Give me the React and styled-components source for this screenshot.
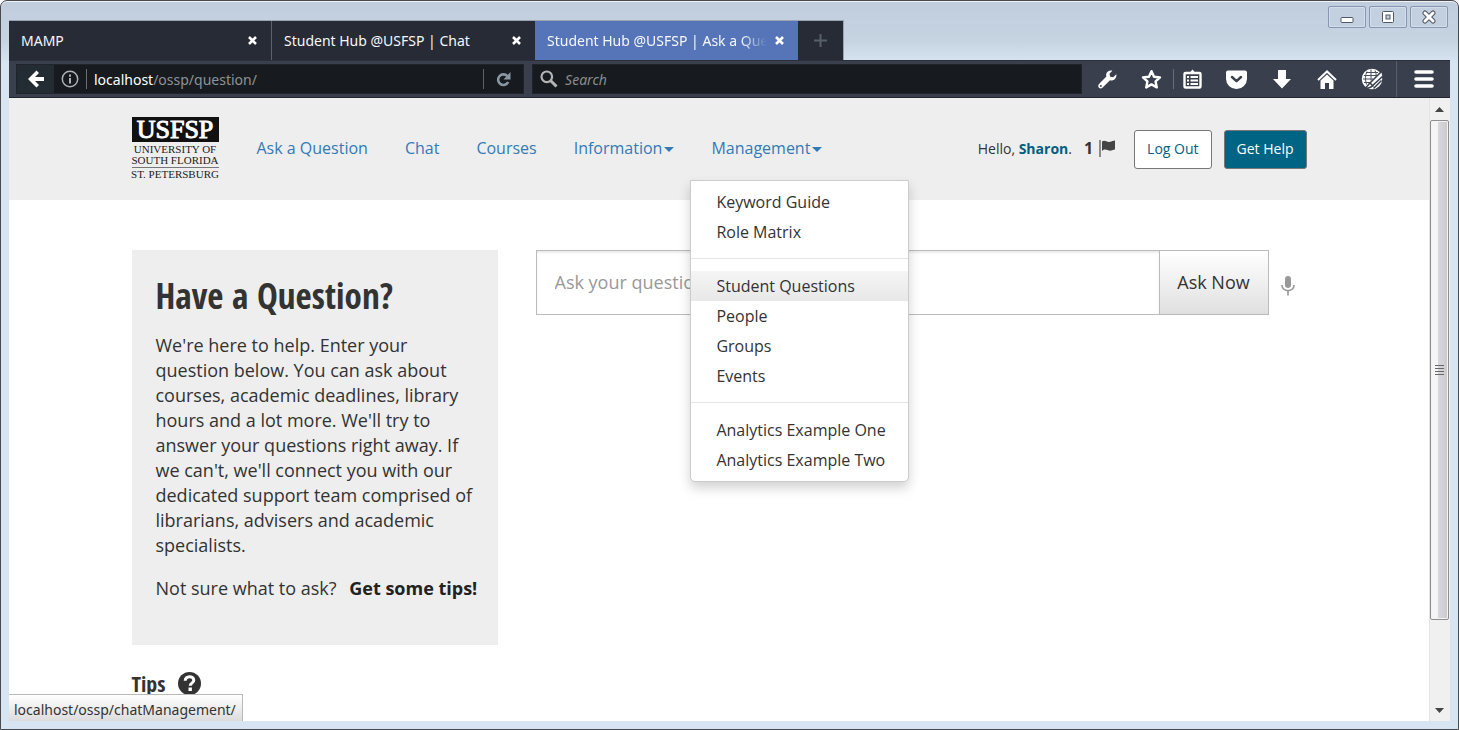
import React from "react";
import styled, { createGlobalStyle, css } from "styled-components";

const GlobalStyle = createGlobalStyle`
  *, *::before, *::after { box-sizing: border-box; }
  html, body { margin: 0; height: 100%; }
  body {
    font-family: "Open Sans", "Noto Sans", sans-serif;
    font-size: 16px;
    color: #333;
    overflow: hidden;
  }
  button, input { font: inherit; color: inherit; margin: 0; }
  a { text-decoration: none; }
`;

const Window = styled.div`
  display: flex;
  flex-direction: column;
  height: 100vh;
  padding: 0 8px 8px;
  border: 1px solid #4a494d;
  border-radius: 7px 7px 0 0;
  background: linear-gradient(#c0cddd 0, #c6d3e1 40px, #d7e4f2 62px);
  box-shadow: inset 0 1px 0 #eef3f8;
`;

const TitleBar = styled.header`
  display: flex;
  justify-content: space-between;
  height: 59px;
  flex: none;
`;

const TabStrip = styled.div`
  display: flex;
  align-self: flex-end;
  height: 40px;
  border-top: 1px solid #9aa3b0;
`;

const Tab = styled.div`
  display: flex;
  align-items: center;
  width: 263px;
  padding: 0 14px 0 12px;
  gap: 8px;
  font-family: "Noto Sans", "Open Sans", sans-serif;
  font-size: 14px;
  color: #f5f7fa;
  background: ${(p) => (p.$active ? "#5675b9" : "#272b35")};
  border-right: ${(p) => (p.$divided ? "1px solid #5b606b" : "0")};
`;

const TabTitle = styled.span`
  flex: 1;
  overflow: hidden;
  white-space: nowrap;
  ${(p) => p.$fade && css`mask-image: linear-gradient(to right, #000 88%, transparent);`}
`;

const PlainButton = styled.button`
  display: flex;
  align-items: center;
  justify-content: center;
  padding: 0;
  border: 0;
  background: none;
  color: #fff;
`;

const NewTab = styled(PlainButton)`
  width: 46px;
  background: #272b35;
  color: #566069;
  border-right: 1px solid #9aa3b0;
`;

const WindowControls = styled.div`
  display: flex;
  gap: 3px;
  padding: 5px 2px 0 0;
`;

const ControlButton = styled(PlainButton)`
  width: 38px;
  height: 22px;
  border: 1px solid #8595b3;
  border-radius: 2px;
  background: #c3d0e0;
  box-shadow: inset 0 0 0 1px #d3deea;
`;

const Toolbar = styled.div`
  display: flex;
  align-items: center;
  flex: none;
  height: 38px;
  padding: 0 0 0 7px;
  gap: 8px;
  background: #393f4c;
  border-top: 1px solid #2a2f3a;
  border-bottom: 1px solid #20242c;
  font-family: "Noto Sans", "Open Sans", sans-serif;
  font-size: 14px;
`;

const Field = styled.div`
  display: flex;
  align-items: center;
  flex: ${(p) => p.$grow} 1 0;
  min-width: 0;
  height: 30px;
  background: #171b1f;
  border: 1px solid #1f252b;
`;

const BackButton = styled(PlainButton)`
  width: 37px;
  height: 100%;
  background: #232b33;
`;

const InfoButton = styled(PlainButton)`
  width: 33px;
  height: 20px;
  border-right: 1px solid #6b7075;
  color: #aeb2b6;
`;

const Address = styled.div`
  flex: 1;
  padding-left: 7px;
  color: #8d9297;
  b { font-weight: 400; color: #fff; }
`;

const Reload = styled(PlainButton)`
  width: 40px;
  height: 20px;
  border-left: 1px solid #5d6266;
  color: #8a97a3;
`;

const SearchInput = styled.input`
  flex: 1;
  min-width: 0;
  padding: 0 0 0 7px;
  border: 0;
  outline: 0;
  background: none;
  color: #fff;
  &::placeholder { color: #8a8c8e; font-style: italic; opacity: 1; }
`;

const SearchLabel = styled.label`
  display: flex;
  padding-left: 7px;
  color: #b4b4b4;
`;

const Tools = styled.div`
  display: flex;
  align-items: center;
  margin-left: -5px;
`;

const Tool = styled(PlainButton)`
  width: 45px;
  height: 36px;
`;

const BookmarkPair = styled.div`
  display: flex;
  align-items: center;
  width: 84px;
`;

const PairTool = styled(PlainButton)`
  width: ${(p) => (p.$first ? "43px" : "37px")};
  height: 20px;
  border-left: ${(p) => (p.$first ? "0" : "1px solid #666c78")};
`;

const MenuButton = styled(PlainButton)`
  width: 54px;
  height: 36px;
  margin-left: 2px;
  border-left: 1px solid #565c69;
`;

const Viewport = styled.div`
  position: relative;
  display: flex;
  flex: 1;
  min-height: 0;
  background: #fff;
`;

const Page = styled.div`
  flex: 1;
  min-width: 0;
  overflow: hidden;
`;

const SiteHeader = styled.header`
  height: 102px;
  background: #eee;
`;

const Container = styled.div`
  display: flex;
  width: 100%;
  max-width: 1175px;
  margin: 0 auto;
`;

const HeaderRow = styled(Container)`
  height: 102px;
  align-items: center;
`;

const Logo = styled.a`
  display: flex;
  flex-direction: column;
  width: 87px;
  height: 64px;
  margin-right: 38px;
  color: #222;
  font-family: "Liberation Serif", serif;
  font-size: 11px;
  line-height: 11px;
  text-align: center;
  white-space: nowrap;
`;

const LogoMark = styled.strong`
  height: 25px;
  margin-bottom: 2px;
  background: #111;
  color: #fff;
  font-size: 26px;
  font-weight: 400;
  line-height: 25px;
  -webkit-text-stroke: 1px #fff;
`;

const LogoLine = styled.span`
  display: flex;
  justify-content: center;
  ${(p) => p.$ruled && css`
    margin-top: 1px;
    padding-top: 1px;
    border-top: 1px solid #777;
  `}
`;

const Nav = styled.nav`
  display: flex;
  gap: 37px;
  padding-bottom: 2px;
  line-height: 24px;
`;

const NavItem = styled.div`
  position: relative;
`;

const NavLink = styled.a`
  display: flex;
  align-items: center;
  gap: 2px;
  color: #337ab7;
`;

const Caret = styled.span`
  margin-top: 3px;
  border: 5px solid transparent;
  border-top-color: currentColor;
  border-bottom: 0;
`;

const Menu = styled.div`
  position: absolute;
  z-index: 2;
  top: calc(100% + 20px);
  left: -21px;
  width: 219px;
  padding: 6px 0;
  border: 1px solid #ccc;
  border-radius: 0 0 5px 5px;
  background: #fff;
  box-shadow: 0 6px 12px rgba(0, 0, 0, 0.18);
`;

const MenuLink = styled.a`
  display: block;
  padding: 0 25px;
  line-height: 30px;
  white-space: nowrap;
  color: #333;
  background: ${(p) => (p.$hovered ? "linear-gradient(#f5f5f5, #e8e8e8)" : "none")};
`;

const Divider = styled.hr`
  height: 1px;
  margin: 11px 0 12px;
  border: 0;
  background: #e5e5e5;
`;

const Account = styled.div`
  display: flex;
  align-items: center;
  margin-left: auto;
  font-size: 14px;
`;

const Greeting = styled.span`
  padding-bottom: 2px;
`;

const Name = styled.a`
  color: #00617f;
  font-weight: 700;
`;

const Flags = styled.span`
  display: flex;
  align-items: center;
  gap: 6px;
  margin: 0 19px 0 12px;
  padding-bottom: 2px;
  font-size: 16px;
  font-weight: 700;
`;

const ActionButton = styled.button`
  height: 39px;
  padding: 0 12px 2px;
  border: 1px solid #777;
  border-radius: 3px;
  background: ${(p) => (p.$primary ? "#006484" : "#fff")};
  color: ${(p) => (p.$primary ? "#fff" : "#00617f")};
  & + & { margin-left: 12px; }
`;

const Main = styled(Container)`
  padding-top: 50px;
  gap: 38px;
`;

const Side = styled.aside`
  flex: 0 0 366px;
  min-width: 0;
`;

const Card = styled.section`
  padding: 24px 22px 44px 24px;
  background: #eee;
  font-size: 18px;
  line-height: 25px;
  p { margin: 0 0 18px; }
  p:last-child { margin: 0; white-space: nowrap; }
`;

const condensed = css`
  font-family: "Open Sans Condensed", "Noto Sans Condensed", "Liberation Sans Narrow", "Open Sans", sans-serif;
  font-weight: 700;
`;

const Title = styled.h1`
  ${condensed}
  margin: 0 0 15px;
  font-size: 35px;
  line-height: 44px;
  white-space: nowrap;
`;

const TipsLink = styled.a`
  margin-left: 8px;
  color: #222;
  font-weight: 700;
`;

const TipsHeading = styled.h2`
  ${condensed}
  display: flex;
  align-items: center;
  gap: 13px;
  margin: 22px 0 0;
  font-size: 22px;
  line-height: 32px;
`;

const AskForm = styled.form`
  display: flex;
  align-items: flex-start;
  flex: 1;
  min-width: 0;
  font-size: 18px;
`;

const Question = styled.input`
  flex: 1;
  min-width: 0;
  height: 65px;
  padding: 0 18px 2px;
  border: 1px solid #bbb;
  border-right: 0;
  background: #fff;
  box-shadow: inset 0 2px 2px rgba(0, 0, 0, 0.08);
  &::placeholder { color: #999; opacity: 1; }
`;

const AskButton = styled.button`
  width: 110px;
  height: 65px;
  padding: 0 0 2px;
  border: 1px solid #bbb;
  background: linear-gradient(#fff, #e0e0e0);
`;

const Mic = styled(PlainButton)`
  width: 38px;
  height: 72px;
  color: #999;
`;

const ScrollBar = styled.div`
  display: flex;
  flex-direction: column;
  width: 21px;
  padding-right: 1px;
  border-left: 1px solid #e3e3e3;
  background: #f0f0f0;
`;

const ScrollArrow = styled(PlainButton)`
  height: 22px;
  flex: none;
  color: #444;
`;

const ScrollThumb = styled.div`
  display: flex;
  flex: 500 1 0;
  align-items: center;
  justify-content: center;
  border: 1px solid #8e8e8e;
  border-radius: 2px;
  background: linear-gradient(to right, #f5f5f5 0 38%, #d8d9dc 42%, #c9cacd);
  box-shadow: inset 0 0 0 1px #f3f3f3;
`;

const ScrollRest = styled.div`
  flex: 79 1 0;
`;

const Status = styled.div`
  position: absolute;
  left: 0;
  bottom: 0;
  height: 27px;
  padding: 0 6px 0 5px;
  border: 1px solid #b9b9b9;
  border-width: 1px 1px 0 0;
  background: linear-gradient(#fff, #dcdcdc);
  font-family: "Noto Sans", "Open Sans", sans-serif;
  font-size: 14px;
  line-height: 29px;
`;

const CloseX = () => (
  <svg width="9" height="9" viewBox="0 0 9 9" stroke="currentColor" strokeWidth="2.6" aria-hidden="true">
    <path d="M1 1l7 7M8 1L1 8" />
  </svg>
);

const MENU = [
  ["Keyword Guide", "Role Matrix"],
  ["Student Questions", "People", "Groups", "Events"],
  ["Analytics Example One", "Analytics Example Two"],
];

const TABS = [
  { title: "MAMP", divided: true },
  { title: "Student Hub @USFSP | Chat" },
  { title: "Student Hub @USFSP | Ask a Question", active: true },
];

function BrowserTabs() {
  return (
    <TabStrip>
      {TABS.map((t) => (
        <Tab key={t.title} $active={t.active} $divided={t.divided}>
          <TabTitle $fade={t.active}>{t.title}</TabTitle>
          <PlainButton aria-label={`Close ${t.title}`}><CloseX /></PlainButton>
        </Tab>
      ))}
      <NewTab aria-label="New tab">
        <svg width="13" height="13" viewBox="0 0 13 13" stroke="currentColor" strokeWidth="2"><path d="M6.5 0v13M0 6.5h13" /></svg>
      </NewTab>
    </TabStrip>
  );
}

function Controls() {
  return (
    <WindowControls>
      <ControlButton aria-label="Minimize">
        <svg width="14" height="14" viewBox="0 0 14 14"><rect x="1" y="7.500" width="12" height="5" rx="1" fill="#fff" stroke="#525866" /></svg>
      </ControlButton>
      <ControlButton aria-label="Maximize">
        <svg width="14" height="14" viewBox="0 0 14 14" fill="#fff" stroke="#525866"><rect x="1.5" y="1.5" width="11" height="11" rx="1" /><rect x="5" y="5" width="4" height="4" fill="#c3d0e0" /></svg>
      </ControlButton>
      <ControlButton aria-label="Close">
        <svg width="14" height="14" viewBox="0 0 14 14" strokeLinecap="round"><path d="M3 3l8 8M11 3l-8 8" stroke="#525866" strokeWidth="5" /><path d="M3 3l8 8M11 3l-8 8" stroke="#fff" strokeWidth="3" /></svg>
      </ControlButton>
    </WindowControls>
  );
}

function BrowserToolbar() {
  return (
    <Toolbar>
      <Field $grow={508}>
        <BackButton aria-label="Back">
          <svg width="16" height="18" viewBox="0 0 16 18" fill="currentColor"><path d="M8.500 0.500l2.500 2.500-4 4H16v4H7l4 4-2.500 2.500L0 9z" /></svg>
        </BackButton>
        <InfoButton aria-label="Site information">
          <svg width="18" height="18" viewBox="0 0 18 18" fill="none" stroke="currentColor"><circle cx="9" cy="9" r="7.700" strokeWidth="1.500" /><path d="M9 8v5.500M9 4.500v2.200" strokeWidth="2" /></svg>
        </InfoButton>
        <Address><b>localhost</b>/ossp/question/</Address>
        <Reload aria-label="Reload">
          <svg width="15" height="15" viewBox="0 0 15 15"><path d="M11.400 4.200A5.300 5.300 0 1 0 12.200 10" fill="none" stroke="currentColor" strokeWidth="2.600" /><path d="M14.500 0v7.500H7.500z" fill="currentColor" /></svg>
        </Reload>
      </Field>
      <Field $grow={550}>
        <SearchLabel htmlFor="browser-search" aria-label="Search">
          <svg width="18" height="18" viewBox="0 0 18 18" fill="none" stroke="currentColor"><circle cx="6.800" cy="6.800" r="5.300" strokeWidth="2.200" /><path d="M10.500 10.500l6 6" strokeWidth="3" /></svg>
        </SearchLabel>
        <SearchInput id="browser-search" placeholder="Search" />
      </Field>
      <Tools>
        <Tool aria-label="Developer tools">
          <svg width="19" height="19" viewBox="0 0 19 19"><path d="M18.300 4.300l-3.100 2.900-3-.500-.7-3L14.300.8C11.800-.2 9 1.300 8.300 3.800c-.3 1-.2 1.900.1 2.800L1 14.100c-1 1-1 2.600 0 3.600 1 .900 2.500.9 3.400 0l7.600-7.500c3.600 1 7.100-2.100 6.300-5.900z" fill="currentColor" /><circle cx="2.900" cy="15.900" r="1" fill="#393f4c" /></svg>
        </Tool>
        <BookmarkPair>
          <PairTool $first aria-label="Bookmark">
            <svg width="21" height="21" viewBox="0 0 21 21"><path d="M10.500 2.200l2.500 5.500 6 .700-4.400 4 1.200 6-5.300-3-5.300 3 1.200-6-4.400-4 6-.7z" fill="none" stroke="currentColor" strokeWidth="2.400" strokeLinejoin="round" /></svg>
          </PairTool>
          <PairTool aria-label="Bookmarks list">
            <svg width="19" height="20" viewBox="0 0 19 20"><path d="M6.500 4L9.500.500 12.500 4z" fill="currentColor" /><rect x="1.500" y="4" width="16" height="14.500" rx="1" fill="none" stroke="currentColor" strokeWidth="2.400" /><path d="M4 8h2M4 11.500h2M4 15h2M7.500 8h7.500M7.500 11.500h7.500M7.500 15h7.500" stroke="currentColor" strokeWidth="2" /></svg>
          </PairTool>
        </BookmarkPair>
        <Tool aria-label="Save to Pocket">
          <svg width="21" height="19" viewBox="0 0 21 19"><path d="M2 .5h17c1.100 0 2 .8 2 2v6A10.400 10.400 0 0 1 10.500 19 10.400 10.400 0 0 1 0 8.500v-6c0-1.200.9-2 2-2z" fill="currentColor" /><path d="M6 7l4.500 4.200L15 7" fill="none" stroke="#393f4c" strokeWidth="2.500" strokeLinecap="round" strokeLinejoin="round" /></svg>
        </Tool>
        <Tool aria-label="Downloads">
          <svg width="18" height="19" viewBox="0 0 18 19" fill="currentColor"><path d="M5 0h8v9h5l-9 9.500L0 9h5z" /></svg>
        </Tool>
        <Tool aria-label="Home">
          <svg width="20" height="19" viewBox="0 0 20 19"><path d="M1 10l9-8.500L19 10" fill="none" stroke="currentColor" strokeWidth="2" /><path d="M3.500 10.500L10 4.500l6.500 6V19H12v-6H8v6H3.500z" fill="currentColor" /></svg>
        </Tool>
        <Tool aria-label="Web annotations">
          <svg width="22" height="22" viewBox="0 0 22 22"><circle cx="11" cy="11" r="9.500" fill="#fff" stroke="#fff" strokeWidth="1.500" /><path d="M3 7.500h13M2 11h10M3 14.500h6M10 1.500v11M6 3.500c-2 4-2 8-.5 13M14 2.500c1 2 1.300 4 1 6M5 4.500h12" stroke="#4b515e" fill="none" /><path d="M21 3L8 16l-4.500 5.500L10 19 22 8z" fill="#fff" stroke="#393f4c" strokeWidth="1.500" /><path d="M9 15l3.500 3.500M12.500 20.500l8-8" stroke="#393f4c" strokeWidth="1.500" /></svg>
        </Tool>
        <MenuButton aria-label="Open menu">
          <svg width="20" height="18" viewBox="0 0 20 18" stroke="currentColor" strokeWidth="3.600" strokeLinecap="round"><path d="M2 2h16M2 9h16M2 16h16" /></svg>
        </MenuButton>
      </Tools>
    </Toolbar>
  );
}

function Header() {
  return (
    <SiteHeader>
      <HeaderRow>
        <Logo href="#home">
          <LogoMark>USFSP</LogoMark>
          <LogoLine>UNIVERSITY OF</LogoLine>
          <LogoLine>SOUTH FLORIDA</LogoLine>
          <LogoLine $ruled>ST. PETERSBURG</LogoLine>
        </Logo>
        <Nav>
          <NavLink href="#ask">Ask a Question</NavLink>
          <NavLink href="#chat">Chat</NavLink>
          <NavLink href="#courses">Courses</NavLink>
          <NavLink href="#information">Information<Caret /></NavLink>
          <NavItem>
            <NavLink href="#management">Management<Caret /></NavLink>
            <Menu>
              {MENU.map((group, i) => (
                <React.Fragment key={group[0]}>
                  {i > 0 && <Divider />}
                  {group.map((label) => (
                    <MenuLink key={label} href="#menu" $hovered={label === "Student Questions"}>{label}</MenuLink>
                  ))}
                </React.Fragment>
              ))}
            </Menu>
          </NavItem>
        </Nav>
        <Account>
          <Greeting>Hello, <Name href="#profile">Sharon</Name>.</Greeting>
          <Flags>
            1
            <svg width="16" height="17" viewBox="0 0 16 17"><path d="M1 0v17" stroke="#555" strokeWidth="1.300" /><path d="M3 1.500c3-2 5 1.200 8 .300 2-.500 3-1 5-1.300v9c-3 .500-4 1.800-7 .800-2.500-1-4-1-6 .700z" fill="#444" /></svg>
          </Flags>
          <ActionButton>Log Out</ActionButton>
          <ActionButton $primary>Get Help</ActionButton>
        </Account>
      </HeaderRow>
    </SiteHeader>
  );
}

export default function App() {
  return (
    <>
      <GlobalStyle />
      <Window>
        <TitleBar>
          <BrowserTabs />
          <Controls />
        </TitleBar>
        <BrowserToolbar />
        <Viewport>
          <Page>
            <Header />
            <Main as="main">
              <Side>
                <Card>
                  <Title>Have a Question?</Title>
                  <p>
                    We're here to help. Enter your question below. You can ask about courses, academic
                    deadlines, library hours and a lot more. We'll try to answer your questions right away.
                    If we can't, we'll connect you with our dedicated support team comprised of librarians,
                    advisers and academic specialists.
                  </p>
                  <p>Not sure what to ask? <TipsLink href="#tips">Get some tips!</TipsLink></p>
                </Card>
                <TipsHeading id="tips">
                  Tips
                  <svg width="23" height="23" viewBox="0 0 23 23"><circle cx="11.500" cy="11.500" r="11.500" fill="#333" /><path d="M7.200 8.700c0-5.300 8.600-5.300 8.600-.5 0 3-3.600 2.800-3.600 5.500" fill="none" stroke="#fff" strokeWidth="3" /><rect x="10.500" y="15.500" width="3.400" height="3.500" fill="#fff" /></svg>
                </TipsHeading>
              </Side>
              <AskForm>
                <Question aria-label="Ask your question" placeholder="Ask your question" />
                <AskButton type="button">Ask Now</AskButton>
                <Mic type="button" aria-label="Speak your question">
                  <svg width="14" height="20" viewBox="0 0 14 20"><rect x="4" y="0" width="6" height="12" rx="3" fill="currentColor" /><path d="M1 9c0 7.500 12 7.500 12 0M7 15v4.500" fill="none" stroke="currentColor" strokeWidth="1.700" /></svg>
                </Mic>
              </AskForm>
            </Main>
          </Page>
          <ScrollBar>
            <ScrollArrow aria-label="Scroll up">
              <svg width="9" height="5" viewBox="0 0 9 5"><path d="M4.500 0L9 5H0z" fill="currentColor" /></svg>
            </ScrollArrow>
            <ScrollThumb>
              <svg width="9" height="10" viewBox="0 0 9 10" stroke="#666"><path d="M0 .5h9M0 3.500h9M0 6.500h9M0 9.500h9" /></svg>
            </ScrollThumb>
            <ScrollRest />
            <ScrollArrow aria-label="Scroll down">
              <svg width="9" height="5" viewBox="0 0 9 5"><path d="M0 0h9L4.500 5z" fill="currentColor" /></svg>
            </ScrollArrow>
          </ScrollBar>
          <Status>localhost/ossp/chatManagement/</Status>
        </Viewport>
      </Window>
    </>
  );
}
